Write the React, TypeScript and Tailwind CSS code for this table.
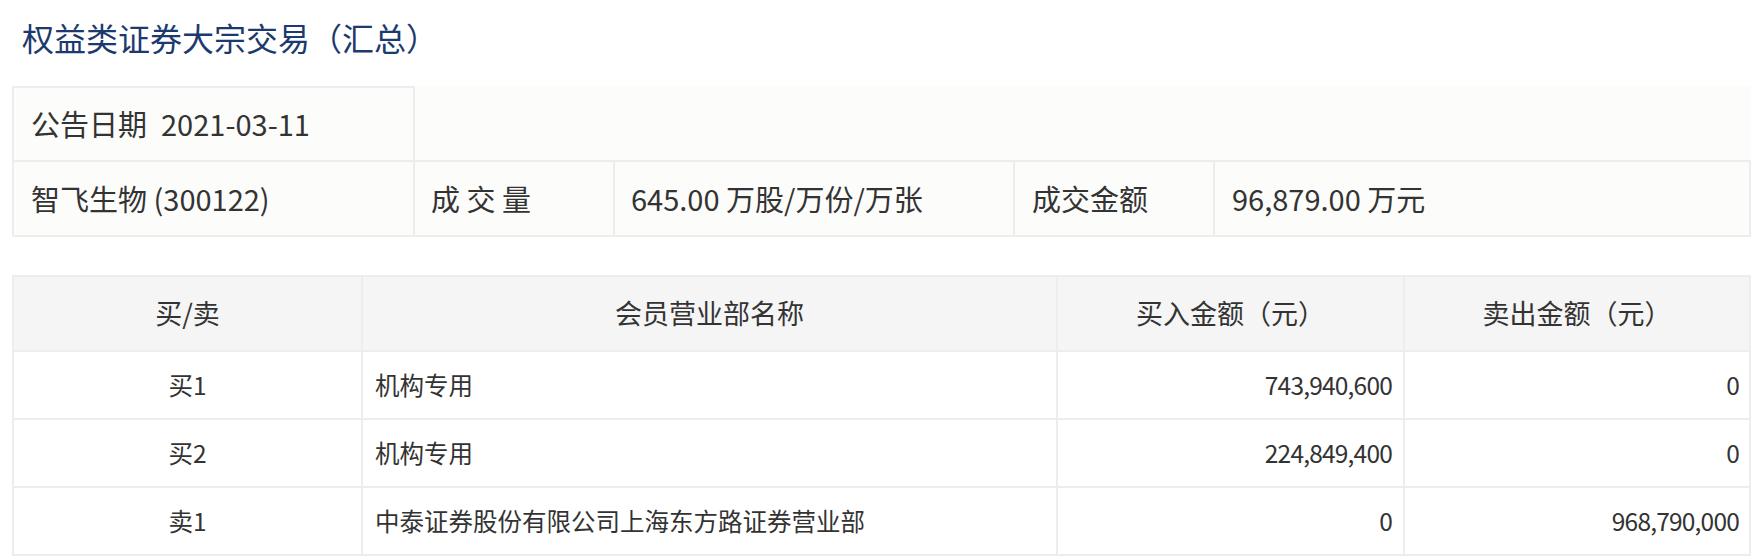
import React from "react";

const rows = [
  { side: "买1", name: "机构专用", buy: "743,940,600", sell: "0" },
  { side: "买2", name: "机构专用", buy: "224,849,400", sell: "0" },
  { side: "卖1", name: "中泰证券股份有限公司上海东方路证券营业部", buy: "0", sell: "968,790,000" },
];

export default function App() {
  return (
    <div className="min-h-[560px] bg-white px-[12px] font-['Noto_Sans_CJK_SC',sans-serif] text-[#333333]">
      <h1 className="ml-[10px] pt-[17px] text-[32px] leading-[40px] font-normal text-[#1c3a6e]">
        权益类证券大宗交易（汇总）
      </h1>

      <table className="mt-[29px] w-[1737px] table-fixed border-collapse bg-[#fcfcfa] text-[29px]">
        <colgroup>
          <col className="w-[401px]" />
          <col className="w-[200px]" />
          <col className="w-[400px]" />
          <col className="w-[200px]" />
          <col className="w-[536px]" />
        </colgroup>
        <tbody>
          <tr className="h-[74px]">
            <td className="border-2 border-[#ededed] pl-[17px] whitespace-nowrap">
              公告日期<span className="ml-[14px]">2021-03-11</span>
            </td>
            <td colSpan={4}></td>
          </tr>
          <tr className="h-[75px]">
            <td className="border-2 border-[#ededed] pl-[17px] whitespace-nowrap">智飞生物 (300122)</td>
            <td className="border-2 border-[#ededed] pl-[16px] whitespace-nowrap">成 交 量</td>
            <td className="border-2 border-[#ededed] pl-[16px] whitespace-nowrap">645.00 万股/万份/万张</td>
            <td className="border-2 border-[#ededed] pl-[17px] whitespace-nowrap">成交金额</td>
            <td className="border-2 border-[#ededed] pl-[17px] whitespace-nowrap">96,879.00 万元</td>
          </tr>
        </tbody>
      </table>

      <table className="mt-[38px] w-[1737px] table-fixed border-collapse text-[24.5px]">
        <colgroup>
          <col className="w-[349px]" />
          <col className="w-[695px]" />
          <col className="w-[347px]" />
          <col className="w-[346px]" />
        </colgroup>
        <thead>
          <tr className="h-[75px] bg-[#f5f5f5] text-[27px]">
            <th className="border-2 border-[#ededed] font-normal">买/卖</th>
            <th className="border-2 border-[#ededed] font-normal">会员营业部名称</th>
            <th className="border-2 border-[#ededed] font-normal">买入金额（元）</th>
            <th className="border-2 border-[#ededed] font-normal">卖出金额（元）</th>
          </tr>
        </thead>
        <tbody>
          {rows.map((r) => (
            <tr key={r.side} className="h-[68px] bg-white">
              <td className="border-2 border-[#ededed] text-center">{r.side}</td>
              <td className="border-2 border-[#ededed] pl-[12px] whitespace-nowrap">{r.name}</td>
              <td className="border-2 border-[#ededed] pr-[11px] text-right tracking-[-0.8px]">{r.buy}</td>
              <td className="border-2 border-[#ededed] pr-[10px] text-right tracking-[-0.8px]">{r.sell}</td>
            </tr>
          ))}
        </tbody>
      </table>
    </div>
  );
}
